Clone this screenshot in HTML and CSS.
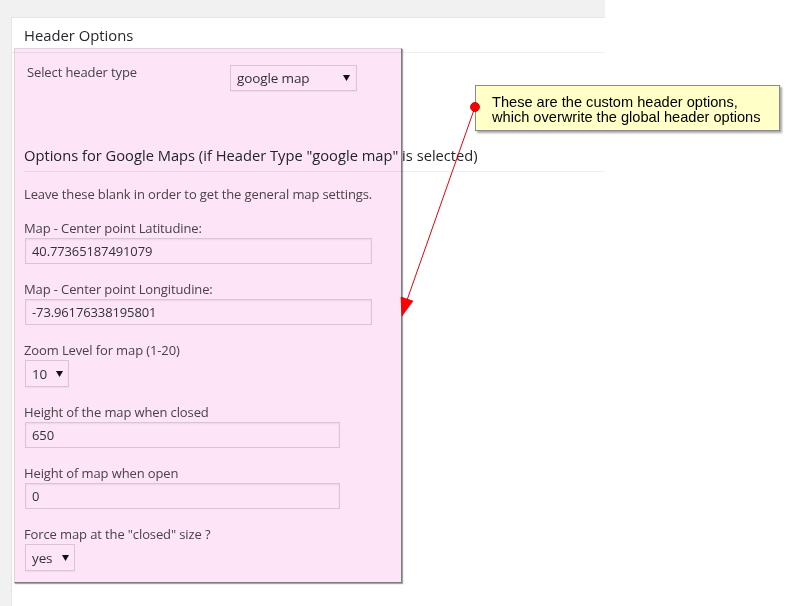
FILE: index.html
```html
<!DOCTYPE html>
<html>
<head>
<meta charset="utf-8">
<title>Header Options</title>
<link rel="stylesheet" href="styles.css">
</head>
<body>
<div class="page">
  <div class="postbox">
    <h3 class="hndle">Header Options</h3>
    <div class="inside">
      <div class="type-row">
        <div class="type-label">Select header type</div>
        <div class="select select-type"><span>google map</span><svg class="caret" width="7" height="6" viewBox="0 0 7 6"><polygon points="0,0 7,0 3.5,6" /></svg></div>
      </div>
      <h4 class="section-title">Options for Google Maps (if Header Type "google map" is selected)</h4>
      <p class="desc">Leave these blank in order to get the general map settings.</p>
      <div class="field">
        <label>Map - Center point Latitudine:</label>
        <div class="text-input wide">40.77365187491079</div>
      </div>
      <div class="field">
        <label>Map - Center point Longitudine:</label>
        <div class="text-input wide">-73.96176338195801</div>
      </div>
      <div class="field">
        <label>Zoom Level for map (1-20)</label>
        <div class="select select-zoom"><span>10</span><svg class="caret" width="7" height="6" viewBox="0 0 7 6"><polygon points="0,0 7,0 3.5,6" /></svg></div>
      </div>
      <div class="field">
        <label>Height of the map when closed</label>
        <div class="text-input medium">650</div>
      </div>
      <div class="field">
        <label>Height of map when open</label>
        <div class="text-input medium">0</div>
      </div>
      <div class="field">
        <label>Force map at the "closed" size ?</label>
        <div class="select select-yes"><span>yes</span><svg class="caret" width="7" height="6" viewBox="0 0 7 6"><polygon points="0,0 7,0 3.5,6" /></svg></div>
      </div>
    </div>
  </div>

  <div class="annotation">
    <div class="highlight"></div>
    <svg class="arrow" width="790" height="606" viewBox="0 0 790 606">
      <line x1="475" y1="107" x2="406" y2="303" stroke="#e8000a" stroke-width="1" />
      <polygon points="401,297 413,301 402,316" fill="#ff0000" stroke="#c00000" stroke-width="0.6" />
    </svg>
    <div class="callout">These are the custom header options,<br>which overwrite the global header options</div>
    <svg class="dot" width="12" height="12" viewBox="0 0 12 12"><circle cx="6" cy="6" r="4.5" fill="#ff0000" stroke="#b00000" stroke-width="0.8" /></svg>
  </div>
</div>
</body>
</html>
```

FILE: styles.css
```css
html, body {
  margin: 0;
  padding: 0;
  background: #ffffff;
  overflow: hidden;
}

body {
  font-family: "Open Sans", "DejaVu Sans", sans-serif;
}

.page {
  position: relative;
  width: 605px;
  height: 606px;
  background: #f1f1f1;
  padding: 17px 0 0 11px;
  box-sizing: border-box;
}

.postbox {
  background: #ffffff;
  border: 1px solid #e5e5e5;
  border-right: 0;
  border-bottom: 0;
  height: 100%;
  box-sizing: border-box;
}

.hndle {
  margin: 0;
  padding: 8px 12px;
  font-size: 14.8px;
  font-weight: 400;
  line-height: 18px;
  color: #23282d;
  border-bottom: 1px solid #eeeeee;
}

.inside {
  padding: 0 0 0 12px;
  font-size: 13px;
  letter-spacing: -0.12px;
  color: #4a4a4a;
}

.type-row {
  display: flex;
  align-items: flex-start;
  margin-top: 10px;
}

.type-label {
  width: 206px;
  padding-left: 3px;
  line-height: 18px;
  box-sizing: border-box;
}

.select {
  display: flex;
  align-items: center;
  justify-content: space-between;
  box-sizing: border-box;
  border: 1px solid #dddddd;
  background: #ffffff;
  color: #32373c;
  font-size: 13.5px;
  line-height: 18px;
  box-shadow: 0 1px 1px rgba(0, 0, 0, 0.04);
}

.select-type {
  width: 127px;
  height: 26px;
  margin-top: 2px;
  padding: 0 6px 1px 6px;
}

.select-zoom {
  width: 44px;
  height: 27px;
  margin-left: 1px;
  padding: 0 5px 0 6px;
}

.select-yes {
  width: 50px;
  height: 27px;
  margin-left: 1px;
  padding: 0 5px 0 6px;
}

.caret {
  display: block;
  fill: #111111;
}

.section-title {
  margin: 54px 0 0;
  padding-bottom: 6px;
  font-size: 14.7px;
  font-weight: 400;
  letter-spacing: 0;
  line-height: 20px;
  color: #23282d;
  border-bottom: 1px solid #eeeeee;
  white-space: nowrap;
}

.desc {
  margin: 13px 0 16px;
  line-height: 18px;
}

.field {
  margin-bottom: 16px;
}

.field label {
  display: block;
  line-height: 18px;
  margin-bottom: 1px;
}

.text-input {
  height: 26px;
  box-sizing: border-box;
  margin-left: 1px;
  padding: 0 6px;
  border: 1px solid #dddddd;
  background: #ffffff;
  box-shadow: inset 0 1px 2px rgba(0, 0, 0, 0.07);
  color: #32373c;
  font-size: 13px;
  line-height: 24px;
}

.wide {
  width: 347px;
}

.medium {
  width: 315px;
}

/* annotation layer drawn over the screenshot */
.annotation {
  position: absolute;
  left: 0;
  top: 0;
  width: 790px;
  height: 606px;
  pointer-events: none;
}

.highlight {
  position: absolute;
  left: 14px;
  top: 48px;
  width: 388px;
  height: 535px;
  box-sizing: border-box;
  background: #fde4f6;
  border: 1px solid #e2d2de;
  border-right-color: #7d7d7d;
  border-bottom-color: #7d7d7d;
  box-shadow: 1px 1px 1px rgba(0, 0, 0, 0.35);
  mix-blend-mode: multiply;
}

.arrow {
  position: absolute;
  left: 0;
  top: 0;
}

.callout {
  position: absolute;
  left: 475px;
  top: 85px;
  width: 305px;
  height: 46px;
  box-sizing: border-box;
  padding: 9px 0 0 16px;
  background: #ffffc8;
  border: 1px solid #8a8a8a;
  box-shadow: 2px 2px 2px rgba(0, 0, 0, 0.35);
  font-family: "Liberation Sans", Arial, sans-serif;
  font-size: 14.6px;
  line-height: 15px;
  color: #000000;
}

.dot {
  position: absolute;
  left: 469px;
  top: 101px;
}
```
